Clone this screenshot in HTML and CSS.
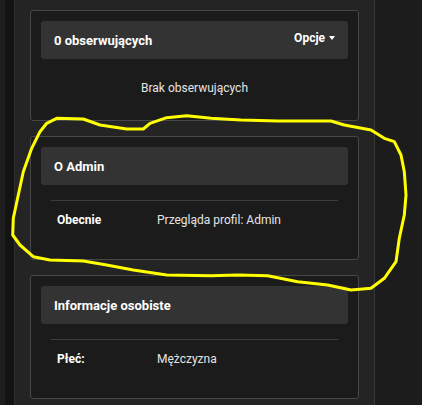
FILE: index.html
```html
<!DOCTYPE html>
<html lang="pl">
<head>
<meta charset="utf-8">
<title>Profil</title>
<link rel="stylesheet" href="styles.css">
</head>
<body>
<div class="page">
  <div class="strip-a"></div>
  <div class="strip-b"></div>
  <main class="panel">
    <section class="card">
      <div class="card-head">
        <h3 class="card-title">0 obserwujących</h3>
        <span class="options">Opcje <span class="caret"></span></span>
      </div>
      <div class="empty">Brak obserwujących</div>
    </section>
    <section class="card">
      <div class="card-head">
        <h3 class="card-title">O Admin</h3>
      </div>
      <div class="rows">
        <div class="row"><span class="label">Obecnie</span><span class="value">Przegląda profil: Admin</span></div>
      </div>
    </section>
    <section class="card">
      <div class="card-head">
        <h3 class="card-title">Informacje osobiste</h3>
      </div>
      <div class="rows">
        <div class="row"><span class="label">Płeć:</span><span class="value">Mężczyzna</span></div>
      </div>
    </section>
  </main>
  <div class="side"></div>
</div>
<svg class="scribble" width="422" height="405" viewBox="0 0 422 405">
  <path d="M211 118.3 L186.7 115.7 L166.7 117.7 L150 123.3 L143.3 129 L126.7 129 L100 125 L83.3 119 L56.7 118.3 L46.7 123.3 L40 131.7 L31.7 148.3 L23.3 171.7 L18.3 195 L13.3 218.3 L12.7 235 L20 245 L33.3 256.7 L50 260 L83.3 261 L106.7 265 L133.3 270 L166.7 275 L211 275.7 L237.7 275 L267.7 275.7 L297.7 281.7 L327.7 285 L351 290 L371 288.3 L384.3 278.3 L396 261.7 L399.3 238.3 L404.3 215 L406 195 L404.3 171.7 L401 155 L394.3 141.7 L384.3 138.3 L371 130 L344.3 125 L331 121 L277.7 121 L241 120 Z" fill="none" stroke="#ffff00" stroke-width="3" stroke-linejoin="round"/>
</svg>
</body>
</html>
```
FILE: styles.css
```css
html, body {
  margin: 0;
  padding: 0;
  background: #1d1d1d;
  font-family: Roboto, "Liberation Sans", sans-serif;
}
.page {
  display: flex;
  min-height: 405px;
  height: 405px;
  overflow: hidden;
}
.strip-a {
  width: 5px;
  background: #1e1e1e;
  flex: none;
}
.strip-b {
  width: 9px;
  background: #131313;
  flex: none;
}
.panel {
  flex: none;
  width: 329px;
  padding: 10px 15px 0 15px;
  background: #242424;
  border-left: 1px solid #2f2f2f;
  border-right: 1px solid #3a3a3a;
  display: flex;
  flex-direction: column;
  gap: 15px;
}
.side {
  flex: 1;
  background: #1c1c1c;
}
.card {
  background: #1b1b1b;
  border: 1px solid #474747;
  border-radius: 3px;
  padding: 10px;
}
.card-head {
  height: 38px;
  background: #333333;
  border-radius: 3px;
  display: flex;
  align-items: center;
  justify-content: space-between;
  padding: 0 13px 0 13px;
}
.card-title {
  margin: 0;
  font-size: 13px;
  font-weight: 700;
  color: #ffffff;
}
.options {
  font-size: 12px;
  font-weight: 700;
  color: #ffffff;
  display: flex;
  align-items: center;
  gap: 4px;
  margin-top: -4px;
}
.caret {
  width: 0;
  height: 0;
  border-left: 3.5px solid transparent;
  border-right: 3.5px solid transparent;
  border-top: 4px solid #ffffff;
}
.empty {
  text-align: center;
  font-size: 12px;
  color: #e4e4e4;
  line-height: 14px;
  padding: 22px 0 15px;
}
.rows {
  margin: 15px 10px 0;
  border-top: 1px solid #3c3c3c;
  padding-bottom: 10px;
}
.row {
  display: flex;
  padding: 12px 6px;
  font-size: 12px;
  line-height: 14px;
}
.label {
  width: 100px;
  font-weight: 700;
  color: #ffffff;
}
.value {
  color: #e4e4e4;
}
.scribble {
  position: absolute;
  top: 0;
  left: 0;
  pointer-events: none;
}
```
